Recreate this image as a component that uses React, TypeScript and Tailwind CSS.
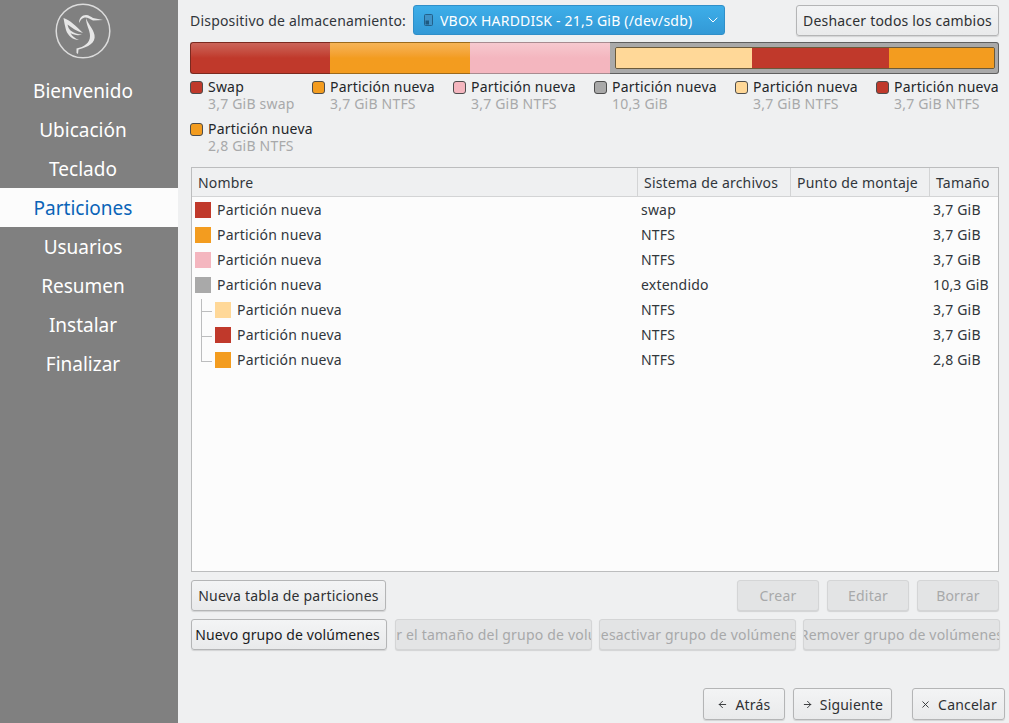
import React from 'react';
import { ArrowLeft, ArrowRight, ChevronDown, X } from 'lucide-react';

const font = { fontFamily: '"Noto Sans", sans-serif' };

const navItems = ['Bienvenido', 'Ubicación', 'Teclado', 'Particiones', 'Usuarios', 'Resumen', 'Instalar', 'Finalizar'];

const legend = [
  { name: 'Swap', info: '3,7 GiB swap', color: 'bg-[#c0392b]', width: 'w-[122px]' },
  { name: 'Partición nueva', info: '3,7 GiB NTFS', color: 'bg-[#f39c1f]', width: 'w-[141px]' },
  { name: 'Partición nueva', info: '3,7 GiB NTFS', color: 'bg-[#f4b6bf]', width: 'w-[141px]' },
  { name: 'Partición nueva', info: '10,3 GiB', color: 'bg-[#a9a9a9]', width: 'w-[141px]' },
  { name: 'Partición nueva', info: '3,7 GiB NTFS', color: 'bg-[#ffd898]', width: 'w-[141px]' },
  { name: 'Partición nueva', info: '3,7 GiB NTFS', color: 'bg-[#c0392b]', width: 'w-[115px]' },
  { name: 'Partición nueva', info: '2,8 GiB NTFS', color: 'bg-[#f39c1f]', width: 'w-[141px]' },
];

const rows = [
  { color: 'bg-[#c0392b]', fs: 'swap', size: '3,7 GiB', child: false },
  { color: 'bg-[#f39c1f]', fs: 'NTFS', size: '3,7 GiB', child: false },
  { color: 'bg-[#f4b6bf]', fs: 'NTFS', size: '3,7 GiB', child: false },
  { color: 'bg-[#a9a9a9]', fs: 'extendido', size: '10,3 GiB', child: false },
  { color: 'bg-[#ffd898]', fs: 'NTFS', size: '3,7 GiB', child: true },
  { color: 'bg-[#c0392b]', fs: 'NTFS', size: '3,7 GiB', child: true },
  { color: 'bg-[#f39c1f]', fs: 'NTFS', size: '2,8 GiB', child: true, last: true },
];

function Logo() {
  return (
    <svg width="56" height="56" viewBox="0 0 56 56" fill="none" className="mr-[13px]">
      <circle cx="28" cy="28" r="26.8" stroke="#dcdcdc" strokeWidth="1.5" />
      <g fill="#e6e6e6">
        {/* head and beak */}
        <path d="M24 20 C24 15 27 12 31 12 C34 12 36 14 38 15 L48 17 L38 17.6 C35 15.5 32 14 29.5 14.5 C27 15 25.5 17 24 20 Z" />
        {/* body and tail */}
        <path d="M31 15 C33 21 38 25 39.5 32 C41 40 33 44 23.5 46.5 L23 51 L21.5 50 L21.5 45.5 C29 44 35 40 35 33 C35 27 31 22 31 15 Z" />
        {/* wing feathers */}
        <path d="M8.5 15 C15 17 21 23 28 30 C22 28.5 17 25 12.5 21.5 C13 24 14 26 15.5 27.5 C19 30 23 31.5 27 31.5 C23 33 19 32 15.5 30 C17 33 20 35.5 24 37 C18 37 13 33 11 27 C10 23 9 19 8.5 15 Z" />
      </g>
    </svg>
  );
}

function DriveIcon() {
  return (
    <svg width="9" height="12" viewBox="0 0 9 12" className="mr-[7px] shrink-0">
      <rect x="0.5" y="0.5" width="8" height="11" rx="1" fill="#3f93c8" stroke="#23618a" />
      <rect x="1.5" y="6.5" width="3.5" height="4" fill="#1d5a82" />
    </svg>
  );
}

function Button({ children, className = '', disabled = false }: { children: React.ReactNode; className?: string; disabled?: boolean }) {
  return (
    <div
      className={`flex shrink-0 items-center justify-center overflow-hidden whitespace-nowrap rounded-[3px] border text-[14px] shadow-[0_1px_1px_rgba(0,0,0,0.12)] ${
        disabled
          ? 'border-[#d4d5d6] bg-[#e3e4e5] text-[#a8a9aa]'
          : 'border-[#b4b5b6] bg-gradient-to-b from-[#f3f4f5] to-[#e9eaeb] text-[#2f3133]'
      } ${className}`}
    >
      {children}
    </div>
  );
}

export default function App() {
  return (
    <div style={font} className="flex h-[723px] w-[1009px] overflow-hidden bg-[#eff0f1] text-[14px] tracking-[0.2px] text-[#232629]">
      {/* sidebar */}
      <div className="flex w-[178px] shrink-0 flex-col bg-[#808080]">
        <div className="flex h-[71px] justify-center pt-[3px]">
          <Logo />
        </div>
        {navItems.map((item) => (
          <div
            key={item}
            className={`flex h-[39px] items-center justify-center pr-[12px] pt-[2px] text-[19px] tracking-normal ${
              item === 'Particiones' ? 'bg-[#fcfcfc] text-[#0a64b8]' : 'text-white'
            }`}
          >
            {item}
          </div>
        ))}
      </div>

      {/* main */}
      <div className="flex min-w-0 flex-1 flex-col pl-[12px] pr-[10px]">
        <div className="flex h-[38px] items-center pt-[2px]">
          <span className="w-[223px] whitespace-nowrap text-[#31363b]">Dispositivo de almacenamiento:</span>
          <div className="flex h-[30px] w-[312px] items-center rounded-[3px] border border-[#2f8fc9] bg-gradient-to-b from-[#3daee9] to-[#3399d6] pl-[10px] pr-[3px] text-white">
            <DriveIcon />
            <span className="flex-1 truncate">VBOX HARDDISK - 21,5 GiB (/dev/sdb)</span>
            <ChevronDown size={16} strokeWidth={1.5} />
          </div>
          <Button className="ml-[71px] h-[31px] w-[203px]">Deshacer todos los cambios</Button>
        </div>

        {/* capacity bar */}
        <div className="mt-[4px] flex h-[32px] w-[809px]">
          <div className="w-[140px] rounded-l-[3px] border-y border-l border-[#7b2a20] bg-gradient-to-b from-[#cb6459] via-[#c0392b] to-[#c0392b]" />
          <div className="w-[140px] border-y border-[#9c6a1c] bg-gradient-to-b from-[#f6b456] via-[#f39c1f] to-[#f39c1f]" />
          <div className="w-[140px] border-y border-[#a88b90] bg-gradient-to-b from-[#f6c9cf] via-[#f4b6bf] to-[#f4b6bf]" />
          <div className="flex flex-1 rounded-r-[3px] border-y border-r border-[#5f5f5f] bg-[#a9a9a9] py-[4px] pl-[5px] pr-[3px]">
            <div className="flex flex-1 overflow-hidden rounded-[2px] border border-[#6b5a3a]">
              <div className="w-[136px] bg-[#ffd898]" />
              <div className="w-[137px] bg-[#c0392b]" />
              <div className="flex-1 bg-[#f39c1f]" />
            </div>
          </div>
        </div>

        {/* legend */}
        <div className="mt-[4px] flex h-[89px] flex-wrap content-start">
          {legend.map((l, i) => (
            <div key={i} className={`flex h-[42px] items-start ${l.width} overflow-visible`}>
              <div className={`mt-[3px] h-[13px] w-[13px] shrink-0 rounded-[3px] border border-[#4d4d4d] ${l.color}`} />
              <div className="ml-[5px] whitespace-nowrap leading-[17px]">
                <div className="text-[#232629]">{l.name}</div>
                <div className="text-[#a8a9aa]">{l.info}</div>
              </div>
            </div>
          ))}
        </div>

        {/* tree */}
        <div className="ml-[1px] flex h-[405px] w-[808px] flex-col border border-[#bcbdbe] bg-[#fcfcfc]">
          <div className="flex h-[29px] border-b border-[#d3d4d5] bg-[#eff0f1] text-[#31363b]">
            <div className="flex w-[446px] items-center border-r border-[#d3d4d5] pl-[6px]">Nombre</div>
            <div className="flex w-[153px] items-center border-r border-[#d3d4d5] pl-[6px]">Sistema de archivos</div>
            <div className="flex w-[139px] items-center border-r border-[#d3d4d5] pl-[6px]">Punto de montaje</div>
            <div className="flex flex-1 items-center pl-[6px]">Tamaño</div>
          </div>
          <div>
            {rows.map((r, i) => (
              <div key={i} className="flex h-[25px] items-center text-[#31363b]">
                <div className={`relative flex w-[446px] items-center ${r.child ? 'pl-[23px]' : 'pl-[3px]'}`}>
                  {r.child && (
                    <>
                      <div className={`absolute left-[9px] top-0 w-px bg-[#bcbdbe] ${r.last ? 'h-[13px]' : 'h-[25px]'}`} />
                      <div className="absolute left-[9px] top-[12px] h-px w-[11px] bg-[#bcbdbe]" />
                    </>
                  )}
                  <div className={`h-[16px] w-[16px] ${r.color}`} />
                  <span className="ml-[6px]">Partición nueva</span>
                </div>
                <div className="w-[292px] pl-[3px]">{r.fs}</div>
                <div className="pl-[3px]">{r.size}</div>
              </div>
            ))}
          </div>
        </div>

        {/* action buttons */}
        <div className="ml-[1px] mt-[8px] flex h-[31px] w-[808px] gap-[8px]">
          <Button className="w-[195px]">Nueva tabla de particiones</Button>
          <div className="flex-1" />
          <Button disabled className="w-[82px]">Crear</Button>
          <Button disabled className="w-[82px]">Editar</Button>
          <Button disabled className="w-[82px]">Borrar</Button>
        </div>
        <div className="ml-[1px] mt-[8px] flex h-[31px] w-[809px] gap-[7px]">
          <Button className="mr-[1px] w-[196px] pr-[3px] tracking-[0.1px] !text-[#1a1c1e]">Nuevo grupo de volúmenes</Button>
          <Button disabled className="w-[197px]">Cambiar el tamaño del grupo de volúmenes</Button>
          <Button disabled className="w-[197px]">Desactivar grupo de volúmenes</Button>
          <Button disabled className="w-[197px]">Remover grupo de volúmenes</Button>
        </div>

        {/* navigation */}
        <div className="-mr-[6px] mt-[38px] flex h-[32px] justify-end">
          <Button className="w-[82px] gap-[7px]"><ArrowLeft size={11} />Atrás</Button>
          <Button className="ml-[8px] w-[99px] gap-[7px]"><ArrowRight size={11} />Siguiente</Button>
          <Button className="ml-[20px] w-[93px] gap-[7px]"><X size={11} />Cancelar</Button>
        </div>
      </div>
    </div>
  );
}
